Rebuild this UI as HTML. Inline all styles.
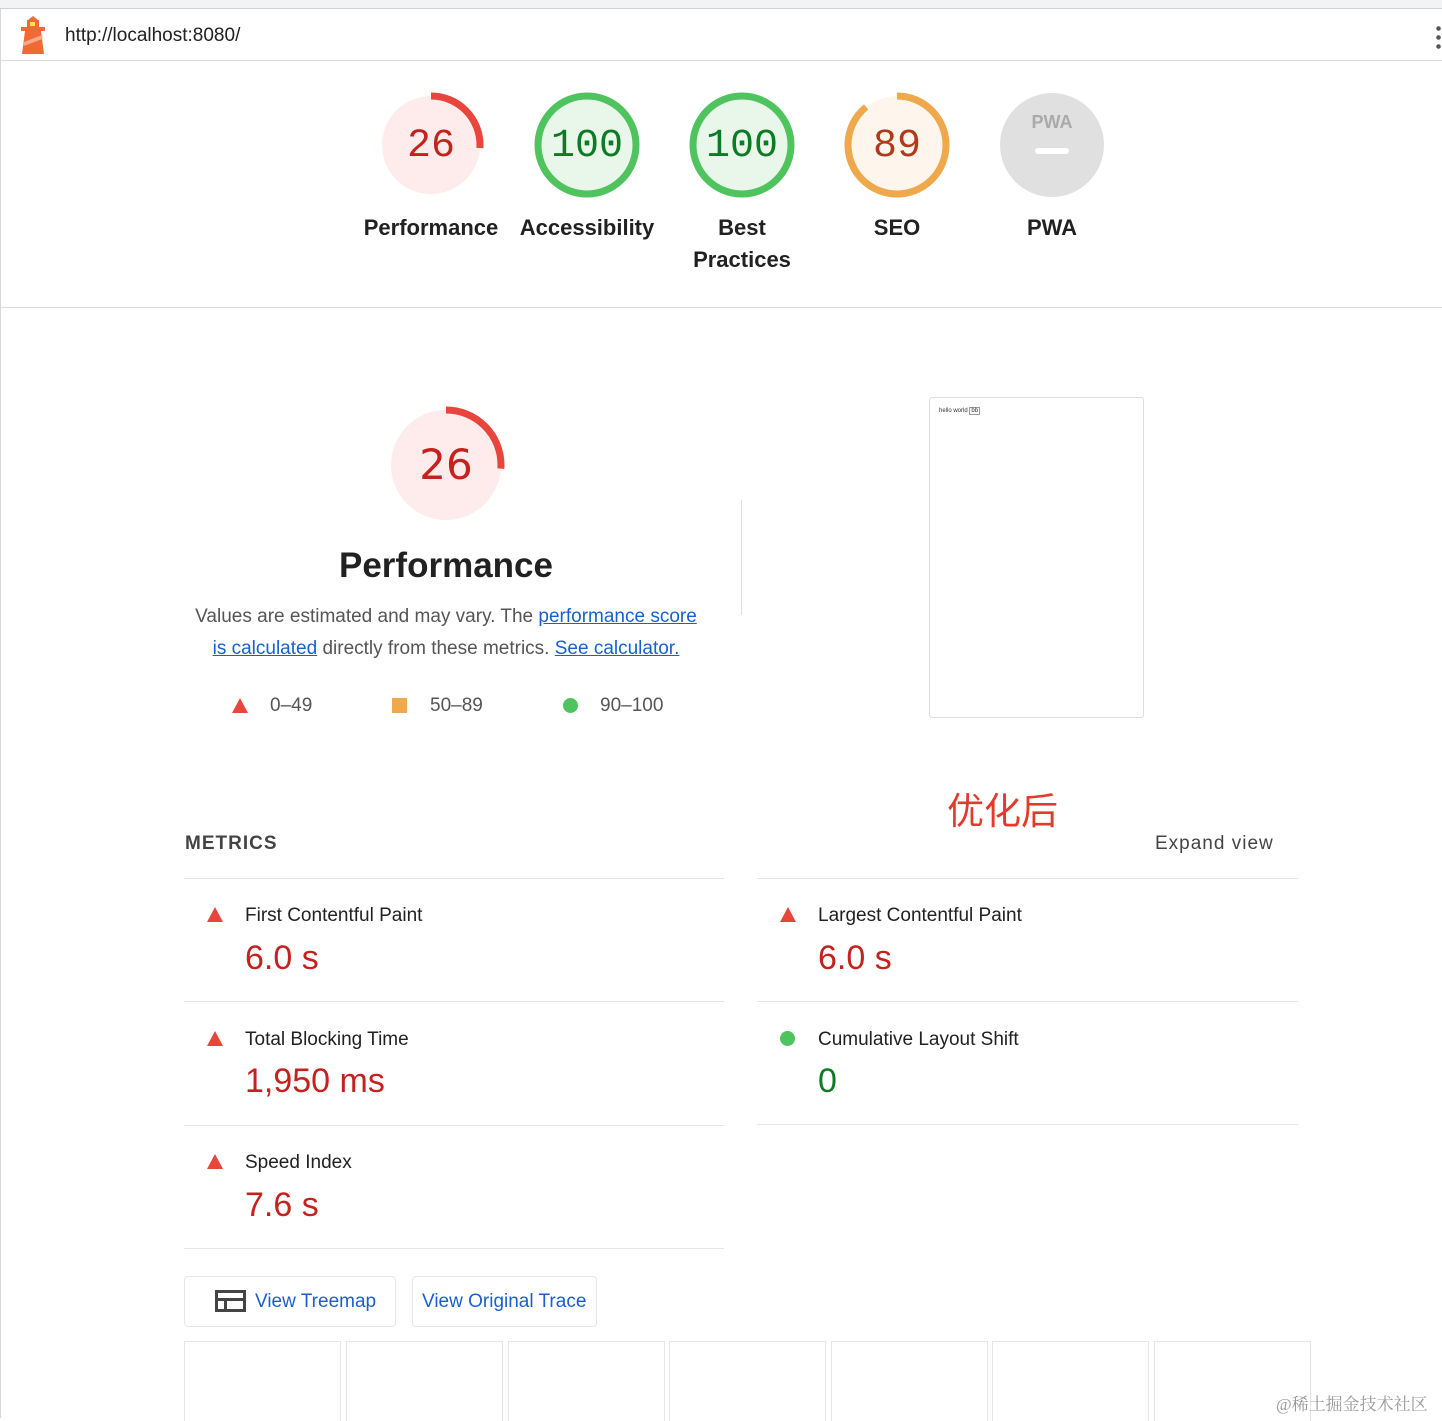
<!DOCTYPE html>
<html><head><meta charset="utf-8"><style>
*{margin:0;padding:0;box-sizing:border-box}
body{width:1442px;height:1418px;overflow:hidden;background:#fff;font-family:"Liberation Sans","Noto Sans CJK SC",sans-serif;color:#212121;position:relative}
.a{position:absolute}
.g{position:absolute;width:110px;height:110px}
.g span{position:absolute;left:0;top:2px;width:110px;height:110px;line-height:110px;text-align:center;font-family:"Liberation Mono","DejaVu Sans Mono",monospace;font-size:40px}
.lbl{position:absolute;width:150px;text-align:center;font-size:22px;line-height:32px;color:#212121;font-weight:bold}
.ln{position:absolute;height:1px;background:#e6e6e6}
.mt{position:absolute;font-size:19px;color:#212121}
.mv{position:absolute;font-size:34px;color:#c5221f}
.tri{position:absolute;width:0;height:0;border-left:8px solid transparent;border-right:8px solid transparent;border-bottom:15px solid #e8453c}
.dot{position:absolute;width:15px;height:15px;border-radius:50%;background:#4fc35d}
a{color:#1a5fd0;text-decoration:underline}
.fs{position:absolute;top:1341px;width:157px;height:80px;border:1px solid #e6e6e6;border-bottom:none}
</style></head><body>
<div class="a" style="left:0;top:0;width:1442px;height:9px;background:#f1f3f4;border-bottom:1px solid #d0d0d0"></div>
<div class="a" style="left:0;top:9px;width:1px;height:1409px;background:#d8d8d8"></div>
<div class="a" style="left:0;top:60px;width:1442px;height:1px;background:#dcdcdc"></div>
<svg class="a" style="left:20px;top:16px" width="26" height="38" viewBox="0 0 26 38"><path d="M8 4 L13 0 L18 4 Z" fill="#f06a35"/><rect x="7" y="4" width="12" height="8" fill="#f06a35"/><rect x="10" y="6" width="5" height="4" fill="#fce548"/><rect x="1" y="11" width="24" height="4" fill="#f06a35"/><path d="M5 15 H21 L24 38 H2 Z" fill="#f06a35"/><path d="M4 26 L22 19 L22.5 23 L3.5 30 Z" fill="#f8a98a"/></svg>
<div class="a" style="left:65px;top:25px;font-size:19px;color:#212121">http://localhost:8080/</div>
<div class="a" style="left:1436px;top:24px;width:5px;height:26px;background:radial-gradient(circle,#555 2px,transparent 2.5px) 0 0/5px 9px"></div>

<div class="g" style="left:376px;top:90px"><svg width="110" height="110"><circle cx="55" cy="55" r="49" fill="#fdeceb"/><circle cx="55" cy="55" r="49" fill="none" stroke="#e8453c" stroke-width="7" stroke-dasharray="80 300" transform="rotate(-90 55 55)"/></svg><span style="color:#c5221f">26</span></div>
<div class="g" style="left:532px;top:90px"><svg width="110" height="110"><circle cx="55" cy="55" r="49" fill="#e9f7ea" stroke="#4fc35d" stroke-width="7"/></svg><span style="color:#0c7b24">100</span></div>
<div class="g" style="left:687px;top:90px"><svg width="110" height="110"><circle cx="55" cy="55" r="49" fill="#e9f7ea" stroke="#4fc35d" stroke-width="7"/></svg><span style="color:#0c7b24">100</span></div>
<div class="g" style="left:842px;top:90px"><svg width="110" height="110"><circle cx="55" cy="55" r="49" fill="#fef6ec"/><circle cx="55" cy="55" r="49" fill="none" stroke="#efa84c" stroke-width="7" stroke-dasharray="274 40" transform="rotate(-90 55 55)"/></svg><span style="color:#b03a1a">89</span></div>
<div class="g" style="left:997px;top:90px"><svg width="110" height="110"><circle cx="55" cy="55" r="52" fill="#e0e0e0"/><text x="55" y="38" text-anchor="middle" font-family="Liberation Sans" font-weight="bold" font-size="18" fill="#aaa">PWA</text><rect x="38" y="58" width="34" height="6" rx="3" fill="#fff"/></svg></div>
<div class="lbl" style="left:356px;top:212px">Performance</div>
<div class="lbl" style="left:512px;top:212px">Accessibility</div>
<div class="lbl" style="left:667px;top:212px">Best<br>Practices</div>
<div class="lbl" style="left:822px;top:212px">SEO</div>
<div class="lbl" style="left:977px;top:212px">PWA</div>
<div class="a" style="left:0;top:307px;width:1442px;height:1px;background:#dcdcdc"></div>

<div class="g" style="left:384px;top:403px;width:124px;height:124px"><svg width="124" height="124"><circle cx="62" cy="62" r="55" fill="#fdeceb"/><circle cx="62" cy="62" r="55" fill="none" stroke="#e8453c" stroke-width="7" stroke-dasharray="90 300" transform="rotate(-90 62 62)"/></svg><span style="width:124px;height:124px;line-height:124px;top:0;font-family:'DejaVu Sans',sans-serif;font-size:42px;color:#c5221f">26</span></div>
<div class="a" style="left:246px;top:546px;width:400px;text-align:center;font-size:35px;font-weight:bold;color:#212121">Performance</div>
<div class="a" style="left:188px;top:601px;width:516px;text-align:center;font-size:19px;line-height:32px;color:#555">Values are estimated and may vary. The <a>performance score is calculated</a> directly from these metrics. <a>See calculator.</a></div>
<div class="tri" style="left:232px;top:698px"></div><div class="a" style="left:270px;top:695px;font-size:19px;color:#555">0–49</div>
<div class="a" style="left:392px;top:698px;width:15px;height:15px;background:#efa84c"></div><div class="a" style="left:430px;top:695px;font-size:19px;color:#555">50–89</div>
<div class="dot" style="left:563px;top:698px"></div><div class="a" style="left:600px;top:695px;font-size:19px;color:#555">90–100</div>
<div class="a" style="left:741px;top:500px;width:1px;height:115px;background:#e0e0e0"></div>
<div class="a" style="left:929px;top:397px;width:215px;height:321px;border:1px solid #ddd;border-radius:3px"><div style="position:absolute;left:9px;top:10px;font-size:6px;color:#333">hello world <span style="border:1px solid #999;padding:0 1px">bb</span></div></div>

<div class="a" style="left:947px;top:781px;font-size:37px;color:#e23b2c">优化后</div>
<div class="a" style="left:185px;top:833px;font-size:19px;letter-spacing:1px;color:#444;font-weight:bold">METRICS</div>
<div class="a" style="left:1155px;top:833px;font-size:19px;letter-spacing:1px;color:#444">Expand view</div>
<div class="ln" style="left:184px;top:878px;width:540px"></div><div class="ln" style="left:757px;top:878px;width:541px"></div>
<div class="ln" style="left:184px;top:1001px;width:540px"></div><div class="ln" style="left:757px;top:1001px;width:541px"></div>
<div class="ln" style="left:184px;top:1125px;width:540px"></div><div class="ln" style="left:757px;top:1124px;width:541px"></div>
<div class="ln" style="left:184px;top:1248px;width:540px"></div>

<div class="tri" style="left:207px;top:907px"></div><div class="mt" style="left:245px;top:905px">First Contentful Paint</div><div class="mv" style="left:245px;top:939px">6.0 s</div>
<div class="tri" style="left:780px;top:907px"></div><div class="mt" style="left:818px;top:905px">Largest Contentful Paint</div><div class="mv" style="left:818px;top:939px">6.0 s</div>
<div class="tri" style="left:207px;top:1031px"></div><div class="mt" style="left:245px;top:1029px">Total Blocking Time</div><div class="mv" style="left:245px;top:1062px">1,950 ms</div>
<div class="dot" style="left:780px;top:1031px"></div><div class="mt" style="left:818px;top:1029px">Cumulative Layout Shift</div><div class="mv" style="left:818px;top:1062px;color:#0c7b24">0</div>
<div class="tri" style="left:207px;top:1154px"></div><div class="mt" style="left:245px;top:1152px">Speed Index</div><div class="mv" style="left:245px;top:1186px">7.6 s</div>

<div class="a" style="left:184px;top:1276px;width:212px;height:51px;border:1px solid #e6e6e6;border-radius:4px"></div>
<svg class="a" style="left:215px;top:1290px" width="31" height="22"><rect x="1.5" y="1.5" width="28" height="19" fill="none" stroke="#444" stroke-width="3"/><rect x="1" y="8" width="29" height="3" fill="#444"/><rect x="9" y="9" width="3" height="12" fill="#444"/></svg>
<div class="a" style="left:255px;top:1291px;font-size:19px;color:#1a5fd0">View Treemap</div>
<div class="a" style="left:412px;top:1276px;width:185px;height:51px;border:1px solid #e6e6e6;border-radius:4px"></div>
<div class="a" style="left:422px;top:1291px;font-size:19px;color:#1a5fd0">View Original Trace</div>

<div class="fs" style="left:184px"></div><div class="fs" style="left:346px"></div><div class="fs" style="left:508px"></div><div class="fs" style="left:669px"></div><div class="fs" style="left:831px"></div><div class="fs" style="left:992px"></div><div class="fs" style="left:1154px"></div>
<div class="a" style="left:1276px;top:1390px;font-size:17px;color:#999;font-family:'Liberation Serif','Noto Serif CJK SC',serif">@稀土掘金技术社区</div>
</body></html>
